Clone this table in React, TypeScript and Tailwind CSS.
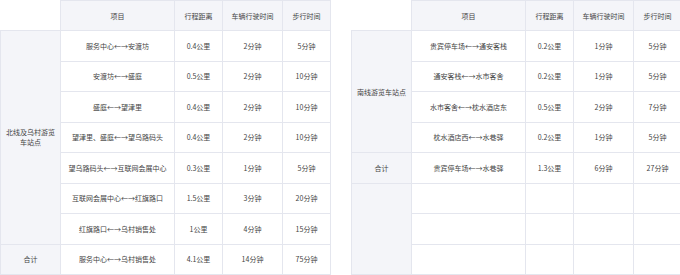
import React from 'react';

type Row = { route: string; dist: string; car: string; walk: string };

interface RouteTableProps {
  group: string;
  rows: Row[];
  total: Row;
  blankRows?: number;
}

const cell = 'border border-[#e4e6ee] text-center align-middle px-1';
const gray = 'bg-[#f4f5f9]';

function RouteTable({ group, rows, total, blankRows = 0 }: RouteTableProps) {
  return (
    <table className="w-[330px] h-[275px] table-fixed border-collapse text-[7px] leading-[10px] text-[#444]">
      <colgroup>
        <col className="w-[60px]" />
        <col className="w-[114px]" />
        <col className="w-[48px]" />
        <col className="w-[60px]" />
        <col className="w-[48px]" />
      </colgroup>
      <thead>
        <tr className="h-[30px]">
          <th className={`${cell} border-t-0 border-l-0 bg-white font-normal`}></th>
          <th className={`${cell} ${gray} font-normal`}>项目</th>
          <th className={`${cell} ${gray} font-normal`}>行程距离</th>
          <th className={`${cell} ${gray} font-normal`}>车辆行驶时间</th>
          <th className={`${cell} ${gray} font-normal`}>步行时间</th>
        </tr>
      </thead>
      <tbody>
        {rows.map((r, i) => (
          <tr key={r.route} className="h-[30px]">
            {i === 0 && (
              <td rowSpan={rows.length} className={`${cell} ${gray}`}>
                {group}
              </td>
            )}
            <td className={cell}>{r.route}</td>
            <td className={cell}>{r.dist}</td>
            <td className={cell}>{r.car}</td>
            <td className={cell}>{r.walk}</td>
          </tr>
        ))}
        <tr className="h-[30px]">
          <td className={`${cell} ${gray}`}>合计</td>
          <td className={cell}>{total.route}</td>
          <td className={cell}>{total.dist}</td>
          <td className={cell}>{total.car}</td>
          <td className={cell}>{total.walk}</td>
        </tr>
        {Array.from({ length: blankRows }).map((_, i) => (
          <tr key={i} className="h-[30px]">
            {i === 0 && <td rowSpan={blankRows} className={`${cell} ${gray}`}></td>}
            <td className={cell}></td>
            <td className={cell}></td>
            <td className={cell}></td>
            <td className={cell}></td>
          </tr>
        ))}
      </tbody>
    </table>
  );
}

const north: Row[] = [
  { route: '服务中心←→安渡坊', dist: '0.4公里', car: '2分钟', walk: '5分钟' },
  { route: '安渡坊←→盛庭', dist: '0.5公里', car: '2分钟', walk: '10分钟' },
  { route: '盛庭←→望津里', dist: '0.4公里', car: '2分钟', walk: '10分钟' },
  { route: '望津里、盛庭←→望乌路码头', dist: '0.4公里', car: '2分钟', walk: '10分钟' },
  { route: '望乌路码头←→互联网会展中心', dist: '0.3公里', car: '1分钟', walk: '5分钟' },
  { route: '互联网会展中心←→红旗路口', dist: '1.5公里', car: '3分钟', walk: '20分钟' },
  { route: '红旗路口←→乌村销售处', dist: '1公里', car: '4分钟', walk: '15分钟' },
];

const south: Row[] = [
  { route: '贵宾停车场←→通安客栈', dist: '0.2公里', car: '1分钟', walk: '5分钟' },
  { route: '通安客栈←→水市客舍', dist: '0.2公里', car: '1分钟', walk: '5分钟' },
  { route: '水市客舍←→枕水酒店东', dist: '0.5公里', car: '2分钟', walk: '7分钟' },
  { route: '枕水酒店西←→水巷驿', dist: '0.2公里', car: '1分钟', walk: '5分钟' },
];

export default function App() {
  return (
    <div className="w-[680px] h-[275px] bg-white flex gap-[20px] overflow-hidden font-['Noto_Sans_CJK_SC','Noto_Sans',sans-serif]">
      <RouteTable
        group="北线及乌村游览车站点"
        rows={north}
        total={{ route: '服务中心←→乌村销售处', dist: '4.1公里', car: '14分钟', walk: '75分钟' }}
      />
      <RouteTable
        group="南线游览车站点"
        rows={south}
        total={{ route: '贵宾停车场←→水巷驿', dist: '1.3公里', car: '6分钟', walk: '27分钟' }}
        blankRows={3}
      />
    </div>
  );
}
